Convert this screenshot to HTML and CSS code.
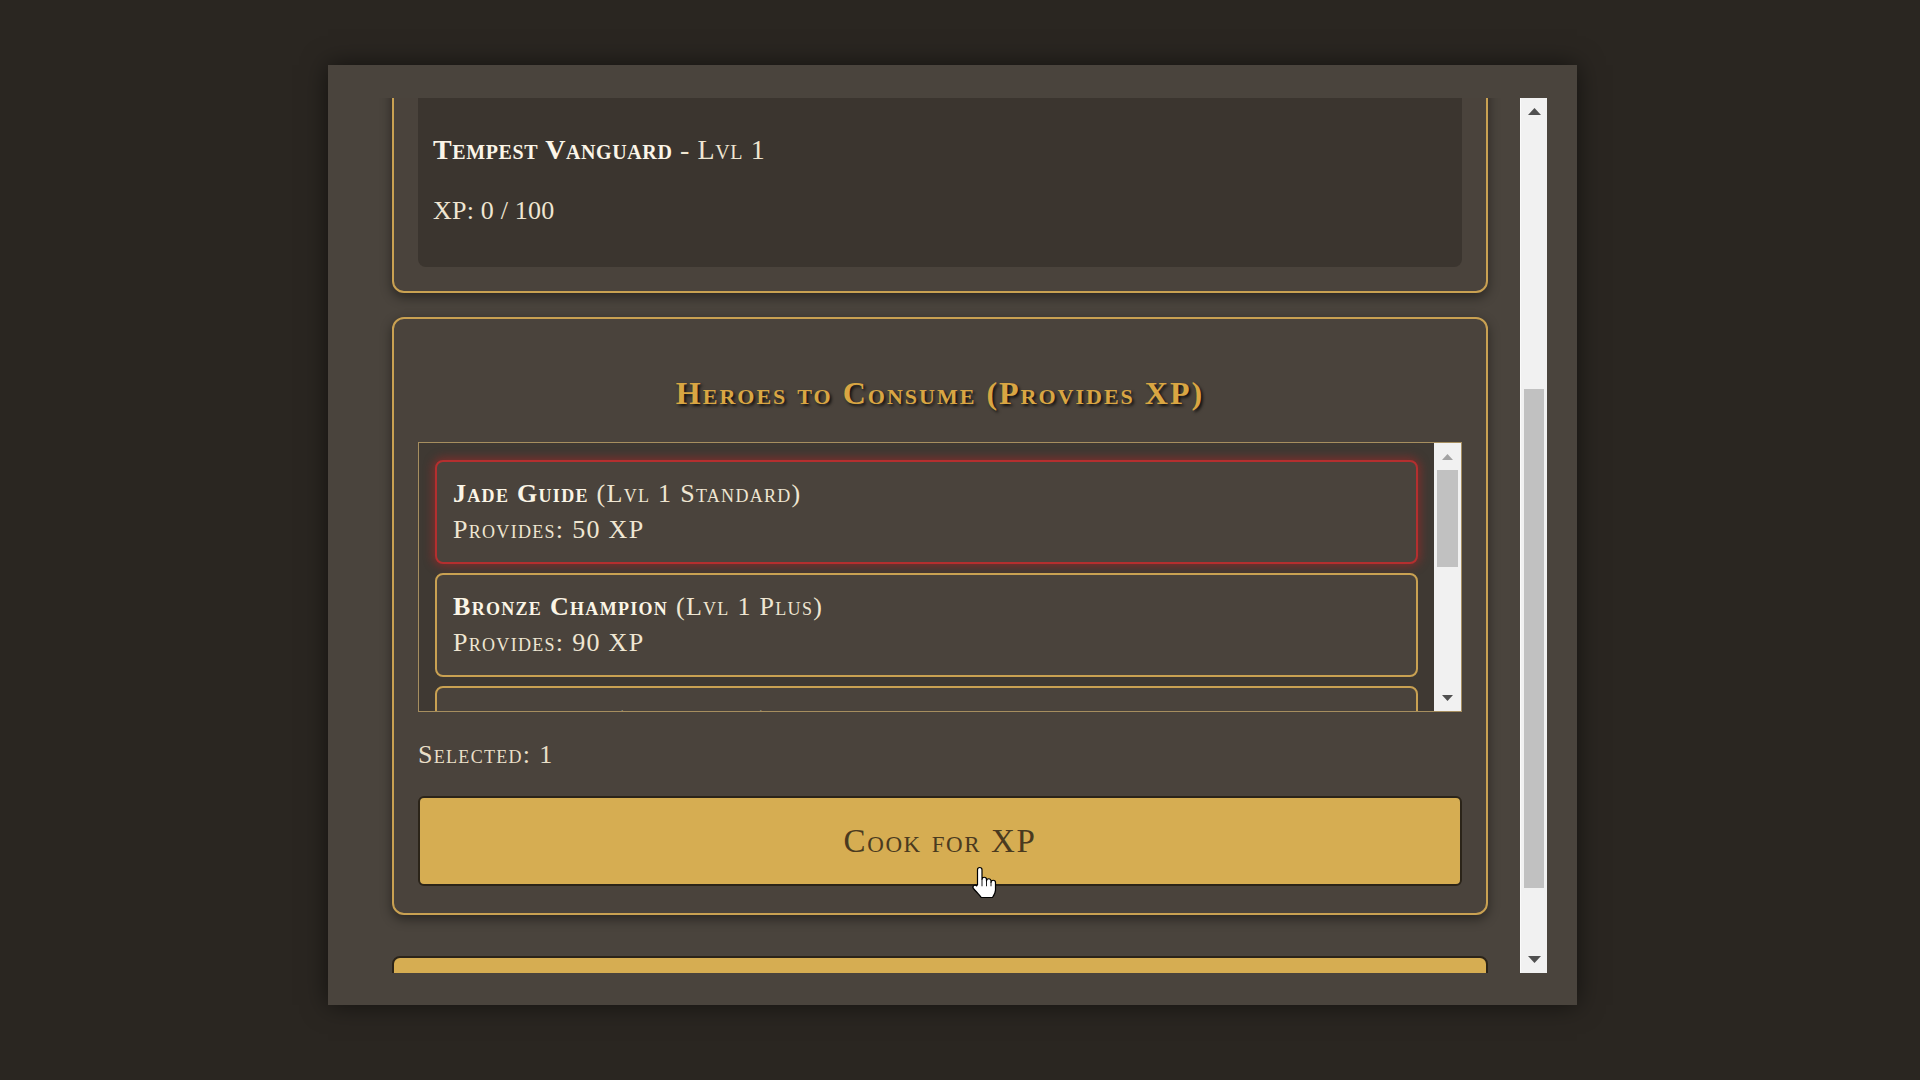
FILE: index.html
```html
<!DOCTYPE html>
<html lang="en">
<head>
<meta charset="utf-8">
<title>Hero Kitchen</title>
<link rel="stylesheet" href="styles.css">
</head>
<body>
<div class="stage">
  <div class="modal">
    <div class="viewport">
      <div class="content">
        <section class="card card-hero">
          <h2 class="card-title">Hero to Level Up</h2>
          <div class="hero-box">
            <h3 class="hero-name"><strong>Tempest Vanguard</strong> - Lvl 1</h3>
            <p class="hero-xp">XP: 0 / 100</p>
          </div>
        </section>

        <section class="card card-consume">
          <h2 class="card-title">Heroes to Consume (Provides XP)</h2>
          <div class="list-box">
            <div class="list-items">
              <div class="item selected">
                <div><strong>Jade Guide</strong> (Lvl 1 Standard)</div>
                <div>Provides: 50 XP</div>
              </div>
              <div class="item">
                <div><strong>Bronze Champion</strong> (Lvl 1 Plus)</div>
                <div>Provides: 90 XP</div>
              </div>
              <div class="item">
                <div><strong>Mystic Sage</strong> (Lvl 1 Elite)</div>
                <div>Provides: 150 XP</div>
              </div>
            </div>
            <div class="sb sb-small">
              <div class="sb-btn">
                <svg width="11" height="6" viewBox="0 0 11 6"><path d="M0 6 L5.5 0 L11 6 Z" class="arrow-off"/></svg>
              </div>
              <div class="sb-track">
                <div class="sb-thumb thumb-small"></div>
              </div>
              <div class="sb-btn">
                <svg width="11" height="6" viewBox="0 0 11 6"><path d="M0 0 L11 0 L5.5 6 Z" class="arrow-on"/></svg>
              </div>
            </div>
          </div>
          <p class="selected-count">Selected: 1</p>
          <button class="btn-gold btn-cook">Cook for XP</button>
        </section>

        <button class="btn-gold btn-close">Close Kitchen</button>
      </div>
    </div>
    <div class="sb sb-main">
      <div class="sb-btn">
        <svg width="13" height="7" viewBox="0 0 13 7"><path d="M0 7 L6.5 0 L13 7 Z" class="arrow-on"/></svg>
      </div>
      <div class="sb-track">
        <div class="sb-thumb thumb-main"></div>
      </div>
      <div class="sb-btn">
        <svg width="13" height="7" viewBox="0 0 13 7"><path d="M0 0 L13 0 L6.5 7 Z" class="arrow-on"/></svg>
      </div>
    </div>
  </div>
</div>

<svg class="cursor" width="27" height="33" viewBox="0 0 18 22">
  <path d="M5 12.5 V2.5 A1.5 1.5 0 0 1 8 2.5 V9 A1.5 1.5 0 0 1 11 9 V10 A1.5 1.5 0 0 1 14 10 V11 A1.5 1.5 0 0 1 17 11 V16 C17 18 16 19.5 15 21 H7.5 C6.5 19.5 4 17 2.3 15 A1.3 1.3 0 0 1 4.4 13.3 Z" fill="#fff" stroke="#000" stroke-width="0.8" stroke-linejoin="round"/>
  <path d="M8 9 V13.5 M11 10 V13.5 M14 11 V13.5" stroke="#000" stroke-width="0.6" fill="none"/>
</svg>

<script src="script.js"></script>
</body>
</html>
```

FILE: styles.css
```css
* { box-sizing: border-box; }

html, body {
  margin: 0;
  height: 1080px;
  background: #2a2621;
  overflow: hidden;
}

body {
  font-family: "Liberation Serif", "Times New Roman", serif;
  font-variant: small-caps;
  color: #efe6d2;
}

.stage {
  padding: 65px 0 0 328px;
}

.modal {
  width: 1249px;
  height: 940px;
  background: #4a443d;
  padding: 33px 30px 32px 32px;
  display: flex;
  box-shadow: 0 0 24px rgba(0, 0, 0, 0.55);
}

.viewport {
  flex: 1;
  height: 875px;
  overflow: hidden;
}

.content {
  padding: 24px 32px 40px;
}

/* cards */
.card {
  border: 2px solid #c9a152;
  border-radius: 12px;
  background: #4a433c;
  padding: 24px;
  margin-bottom: 24px;
  box-shadow: 0 4px 12px rgba(0, 0, 0, 0.45);
}

.card-title {
  margin: 29px 0 28px;
  font-size: 32px;
  line-height: 42px;
  font-weight: bold;
  letter-spacing: 2px;
  text-align: center;
  color: #d9a643;
  text-shadow: 2px 2px 3px rgba(0, 0, 0, 0.75);
}

.hero-box {
  background: #3b352f;
  border-radius: 8px;
  padding: 40px 15px 38px;
}

.hero-name {
  margin: 0 0 23px;
  font-size: 28px;
  line-height: 40px;
  font-weight: normal;
  letter-spacing: 0.6px;
  color: #efe6d2;
}

.hero-name strong {
  color: #fbf5e8;
}

.hero-xp {
  margin: 0;
  font-size: 26px;
  line-height: 36px;
  letter-spacing: 0.2px;
  font-variant: normal;
}

/* list */
.list-box {
  height: 270px;
  border: 1px solid #a68e5f;
  background: #3f3933;
  display: flex;
}

.list-items {
  flex: 1;
  overflow: hidden;
  padding: 17px 16px 0 16px;
}

.item {
  border: 2px solid #c9a152;
  border-radius: 8px;
  background: #4a433c;
  padding: 14px 16px;
  margin-bottom: 9px;
  font-size: 26px;
  line-height: 36px;
  letter-spacing: 1.3px;
  color: #efe6d2;
}

.item strong {
  color: #fbf5e6;
}

.item.selected {
  border-color: #b42f2f;
  box-shadow: 0 0 10px 2px rgba(190, 35, 35, 0.5);
}

.selected-count {
  margin: 25px 0 23px;
  font-size: 26px;
  line-height: 36px;
  letter-spacing: 1.3px;
  color: #e9dfc8;
}

/* buttons */
.btn-gold {
  display: block;
  width: 100%;
  background: #d6ad52;
  border: 2px solid #2b2419;
  border-radius: 6px;
  font-family: "Liberation Serif", "Times New Roman", serif;
  font-variant: small-caps;
  color: #4a3a1f;
}

.btn-cook {
  height: 90px;
  margin-bottom: 3px;
  font-size: 33px;
  letter-spacing: 1.6px;
}

.btn-close {
  height: 90px;
  margin-top: 41px;
  border-radius: 8px;
  font-size: 30px;
}

/* fake scrollbars */
.sb {
  width: 27px;
  background: #f1f1f1;
  display: flex;
  flex-direction: column;
}

.sb-main {
  border-left: 1px solid #fbfbfb;
}

.sb-btn {
  height: 27px;
  flex: none;
  display: flex;
  align-items: center;
  justify-content: center;
}

.sb-track {
  flex: 1;
  padding: 0 3px;
}

.sb-thumb {
  background: #c1c1c1;
}

.thumb-main {
  margin-top: 264px;
  height: 499px;
}

.thumb-small {
  height: 97px;
}

.arrow-on { fill: #505050; }
.arrow-off { fill: #a3a3a3; }

.cursor {
  position: absolute;
  left: 970px;
  top: 866px;
}
```

FILE: script.js
```js
(function () {
  var vp = document.querySelector('.viewport');
  var card = document.querySelector('.card-hero');
  var delta = card.getBoundingClientRect().bottom - 293;
  vp.scrollTop = vp.scrollTop + delta;
})();
```
